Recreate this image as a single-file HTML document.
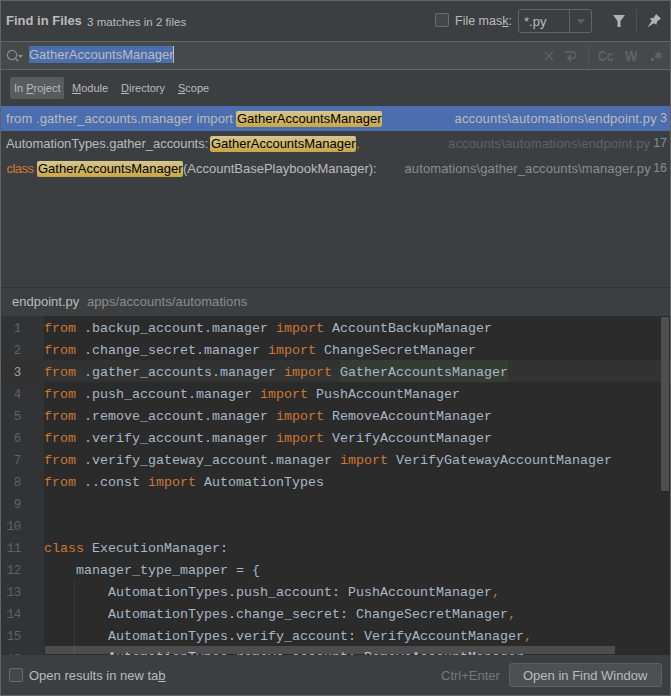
<!DOCTYPE html>
<html><head><meta charset="utf-8">
<style>
*{margin:0;padding:0;box-sizing:border-box}
html,body{width:671px;height:696px;overflow:hidden;background:#3c3f41}
body{font-family:"Liberation Sans",sans-serif;color:#bbbbbb;position:relative}
.abs{position:absolute}
#frame{position:absolute;left:0;top:0;width:671px;height:696px;border:1px solid #646464;pointer-events:none;z-index:50}
.t{position:absolute;white-space:pre;line-height:1}
.sep{position:absolute;background:#646566}
.mono{font-family:"Liberation Mono",monospace}
.kw{color:#cc7832}
.hlb{position:absolute;width:146px;height:16px;border-radius:2px;background:linear-gradient(#d5c690,#c8a746)}
.rn{right:4.5px;text-align:right;font-size:12.4px!important;letter-spacing:-0.3px}
</style></head><body>

<!-- title bar -->
<div class="t" style="left:6px;top:14px;font-size:13px;font-weight:bold;color:#bbbbbb">Find in Files</div>
<div class="t" style="left:87px;top:16px;font-size:11.6px;color:#bbbbbb">3 matches in 2 files</div>

<div class="abs" style="left:435px;top:13px;width:14px;height:14px;border:1px solid #6b6b6b;border-radius:2px;background:#43494a"></div>
<div class="t" style="left:455px;top:15px;font-size:12.5px">File mas<u>k</u>:</div>
<div class="abs" style="left:518px;top:9px;width:74px;height:24px;border:1px solid #646464;border-radius:3px;background:#3c3f41"></div>
<div class="abs" style="left:569px;top:10px;width:1px;height:22px;background:#646464"></div>
<div class="t" style="left:524px;top:15px;font-size:13px">*.py</div>
<svg class="abs" style="left:576px;top:19px" width="10" height="6"><path d="M0.5 0H9.5L5 5Z" fill="#5b5e60"/></svg>
<!-- filter -->
<svg class="abs" style="left:612px;top:14px" width="14" height="14"><path d="M1 1H13L8.5 7V13H5.5V7Z" fill="#afb1b3"/></svg>
<div class="abs" style="left:636px;top:9px;width:1px;height:24px;background:#4f5253"></div>
<!-- pin -->
<svg class="abs" style="left:646px;top:13px" width="16" height="16"><path d="M10.1 1.1L15 5.6L11 8.4L10.5 11.7L7.8 10.2L1.4 14.6L5.8 7.7L3.7 5.4L7.8 4.7Z" fill="#afb1b3"/></svg>

<!-- search field -->
<div class="sep" style="left:0;top:41px;width:671px;height:1px"></div>
<div class="abs" style="left:0;top:42px;width:671px;height:27px;background:#45494a"></div>
<div class="sep" style="left:0;top:69px;width:671px;height:1px"></div>
<svg class="abs" style="left:5px;top:48px" width="20" height="16"><circle cx="7" cy="7" r="4.6" fill="none" stroke="#8c9092" stroke-width="1.1"/><path d="M10 10L13.3 13.3" stroke="#8c9092" stroke-width="1.3"/><path d="M13 7H18L15.5 10Z" fill="#8c9092"/></svg>
<div class="abs" style="left:29px;top:46px;width:144px;height:17px;background:#4b6eaf"></div>
<div class="t" style="left:29px;top:48px;font-size:13px;color:#bbbbbb">GatherAccountsManager</div>
<div class="abs" style="left:173px;top:46px;width:1px;height:17px;background:#bbbbbb"></div>
<svg class="abs" style="left:544px;top:51px" width="10" height="10"><path d="M1 1L9 9M9 1L1 9" stroke="#5f6466" stroke-width="1.1"/></svg>
<svg class="abs" style="left:564px;top:50px" width="14" height="13"><path d="M1 2H8.5A3.2 3.2 0 0 1 8.5 8.4H5.5" fill="none" stroke="#5f6466" stroke-width="1.3"/><path d="M2.6 8.3L7 4.3V12.3Z" fill="#5f6466"/></svg>
<div class="abs" style="left:588px;top:46px;width:1px;height:19px;background:#515658"></div>
<div class="t" style="left:597.5px;top:50px;font-size:13.8px;font-weight:bold;color:#5f6466;transform:scaleX(0.87);transform-origin:0 0">Cc</div>
<div class="t" style="left:625px;top:50px;font-size:13.8px;font-weight:bold;color:#5f6466;transform:scaleX(0.95);transform-origin:0 0">W</div>
<div class="abs" style="left:651px;top:58px;width:3px;height:3px;background:#5f6466"></div><svg class="abs" style="left:654px;top:51px" width="9" height="9"><path d="M4.5 0.5V8.5M1 2.5L8 6.5M8 2.5L1 6.5" stroke="#5f6466" stroke-width="1.6"/></svg>

<!-- scope row -->
<div class="abs" style="left:10px;top:77px;width:54px;height:22px;background:#585c5e;border-radius:2px"></div>
<div class="t" style="left:14px;top:83px;font-size:11px">In <u>P</u>roject</div>
<div class="t" style="left:72px;top:83px;font-size:11px"><u>M</u>odule</div>
<div class="t" style="left:121px;top:83px;font-size:11px"><u>D</u>irectory</div>
<div class="t" style="left:178px;top:83px;font-size:11px"><u>S</u>cope</div>

<!-- results -->
<div class="abs" style="left:1px;top:106px;width:669px;height:25px;background:#4b6eaf"></div>
<div class="t" style="left:6px;top:112px;font-size:13px;letter-spacing:0.085px">from .gather_accounts.manager import</div>
<div class="hlb" style="left:236px;top:111px"></div>
<div class="t" style="left:237px;top:112px;font-size:13px;color:#000">GatherAccountsManager</div>
<div class="t" style="left:454.5px;top:112px;font-size:13px;letter-spacing:0.16px">accounts\automations\endpoint.py</div>
<div class="t rn" style="top:112px;font-size:13px">3</div>

<div class="t" style="left:6px;top:137px;font-size:13px;letter-spacing:-0.05px">AutomationTypes.gather_accounts:</div>
<div class="hlb" style="left:210px;top:136px"></div>
<div class="t" style="left:211px;top:137px;font-size:13px;color:#000">GatherAccountsManager</div>
<div class="t" style="left:356px;top:137px;font-size:13px;color:#cc7832">,</div>
<div class="t" style="left:448px;top:137px;font-size:13px;letter-spacing:0.155px;color:#5e6366">accounts\automations\endpoint.py</div>
<div class="t rn" style="top:137px;font-size:13px;color:#8c8c8c">17</div>

<div class="t" style="left:6.5px;top:162px;font-size:13px;letter-spacing:-0.55px;color:#cc7832">class</div>
<div class="hlb" style="left:37px;top:161px"></div>
<div class="t" style="left:38px;top:162px;font-size:13px;color:#000">GatherAccountsManager</div>
<div class="t" style="left:183px;top:162px;font-size:13px">(AccountBasePlaybookManager):</div>
<div class="t" style="left:404.5px;top:162px;font-size:13px;letter-spacing:0.11px;color:#8c8c8c">automations\gather_accounts\manager.py</div>
<div class="t rn" style="top:162px;font-size:13px;color:#8c8c8c">16</div>

<!-- preview header -->
<div class="sep" style="left:0;top:287px;width:671px;height:1px;background:#323232"></div>
<div class="t" style="left:12px;top:295px;font-size:13px;color:#bbbbbb">endpoint.py</div>
<div class="t" style="left:87px;top:295px;font-size:13px;letter-spacing:0.08px;color:#8c8c8c">apps/accounts/automations</div>

<!-- editor -->
<div class="abs" style="left:0;top:316px;width:671px;height:339px;background:#2b2b2b;overflow:hidden" id="ed">
  <div class="abs" style="left:0;top:0;width:44px;height:339px;background:#313335"></div>
  <div class="abs" style="left:0;top:44px;width:671px;height:22px;background:#323232"></div>
  <div class="abs" style="left:340px;top:44px;width:168px;height:22px;background:#343d33"></div>
  <div class="abs" style="left:74px;top:264px;width:1px;height:80px;background:#393939"></div>
  <div class="abs" style="left:45px;top:330px;width:570px;height:8px;background:rgba(255,255,255,0.165);z-index:3"></div>
  <div class="abs mono" id="gut" style="left:0;top:2px;width:20.6px;text-align:right;font-size:12.5px;letter-spacing:-0.6px;color:#606366;line-height:22px">1<br>2<br><span style="color:#a4a3a3">3</span><br>4<br>5<br>6<br>7<br>8<br>9<br>10<br>11<br>12<br>13<br>14<br>15<br><span style="position:relative;top:1px">16</span></div>
  <pre class="abs mono" style="left:44px;top:1.5px;font-size:13.333px;line-height:22px;color:#a9b7c6"><span class="kw">from</span> .backup_account.manager <span class="kw">import</span> AccountBackupManager
<span class="kw">from</span> .change_secret.manager <span class="kw">import</span> ChangeSecretManager
<span class="kw">from</span> .gather_accounts.manager <span class="kw">import</span> GatherAccountsManager
<span class="kw">from</span> .push_account.manager <span class="kw">import</span> PushAccountManager
<span class="kw">from</span> .remove_account.manager <span class="kw">import</span> RemoveAccountManager
<span class="kw">from</span> .verify_account.manager <span class="kw">import</span> VerifyAccountManager
<span class="kw">from</span> .verify_gateway_account.manager <span class="kw">import</span> VerifyGatewayAccountManager
<span class="kw">from</span> ..const <span class="kw">import</span> AutomationTypes


<span class="kw">class</span> ExecutionManager:
    manager_type_mapper = {
        AutomationTypes.push_account: PushAccountManager<span class="kw">,</span>
        AutomationTypes.change_secret: ChangeSecretManager<span class="kw">,</span>
        AutomationTypes.verify_account: VerifyAccountManager<span class="kw">,</span>
<span style="position:relative;top:-1px">        AutomationTypes.remove_account: RemoveAccountManager<span class="kw">,</span></span>
</pre>
  <div class="abs" style="left:661px;top:1px;width:8px;height:174px;background:#4e4e4e"></div>
</div>

<!-- bottom -->
<div class="abs" style="left:9px;top:668px;width:14px;height:14px;border:1px solid #6b6b6b;border-radius:2px;background:#43494a"></div>
<div class="t" style="left:29px;top:669px;font-size:13px">Open results in new ta<u>b</u></div>
<div class="t" style="left:441px;top:669px;font-size:13px;color:#787878">Ctrl+Enter</div>
<div class="abs" style="left:509px;top:663px;width:153px;height:24px;border:1px solid #5e6060;border-radius:3px;background:#4c5052"></div>
<div class="t" style="left:523px;top:669px;font-size:13px">Open in Find Window</div>

<div id="frame"></div>
</body></html>
